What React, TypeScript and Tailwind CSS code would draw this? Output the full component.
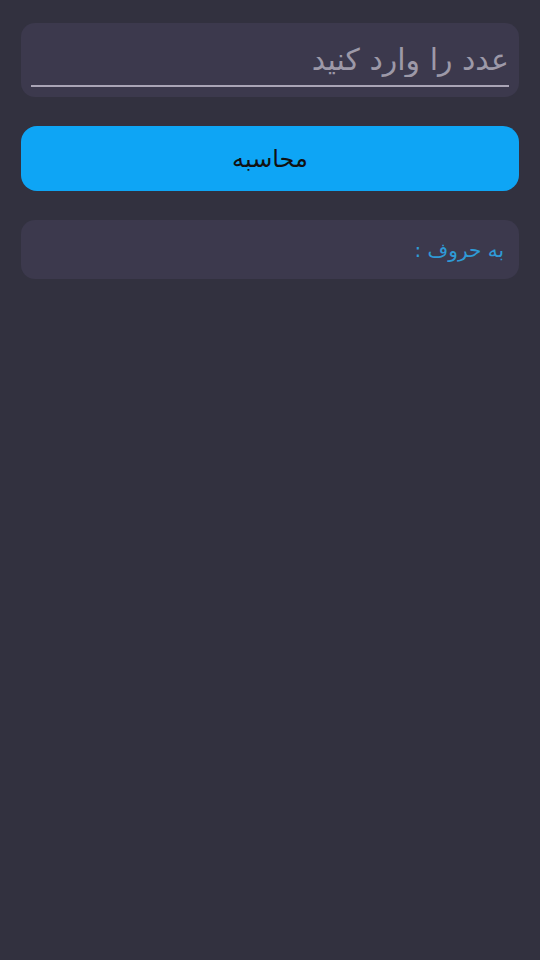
import { FC, useState } from 'react';

const App: FC = () => {
  const [value, setValue] = useState('');

  return (
    <div
      dir="rtl"
      className="min-h-[960px] w-full bg-[#32313f] px-[21px] pt-[23px]"
      style={{ fontFamily: '"DejaVu Sans", "Noto Sans", sans-serif' }}
    >
      {/* Input */}
      <div className="h-[74px] rounded-[14px] bg-[#3c394d] px-[10px] pt-[14px]">
        <input
          value={value}
          onChange={(e) => setValue(e.target.value)}
          placeholder="عدد را وارد کنید"
          className="h-[50px] w-full border-b-[2px] border-[#aaa5b6] bg-transparent pb-[4px] text-right text-[30px] text-white outline-none placeholder:text-[#9d99a8]"
        />
      </div>

      {/* Button */}
      <button className="mt-[29px] flex h-[65px] w-full items-center justify-center rounded-[16px] bg-[#0ea5f5] text-[24px] text-[#111]">
        محاسبه
      </button>

      {/* Result */}
      <div className="mt-[29px] flex h-[59px] items-center rounded-[14px] bg-[#3c394d] px-[15px]">
        <span className="text-[20px] text-[#2f9ad6]">به حروف :</span>
      </div>
    </div>
  );
};

export default App;
